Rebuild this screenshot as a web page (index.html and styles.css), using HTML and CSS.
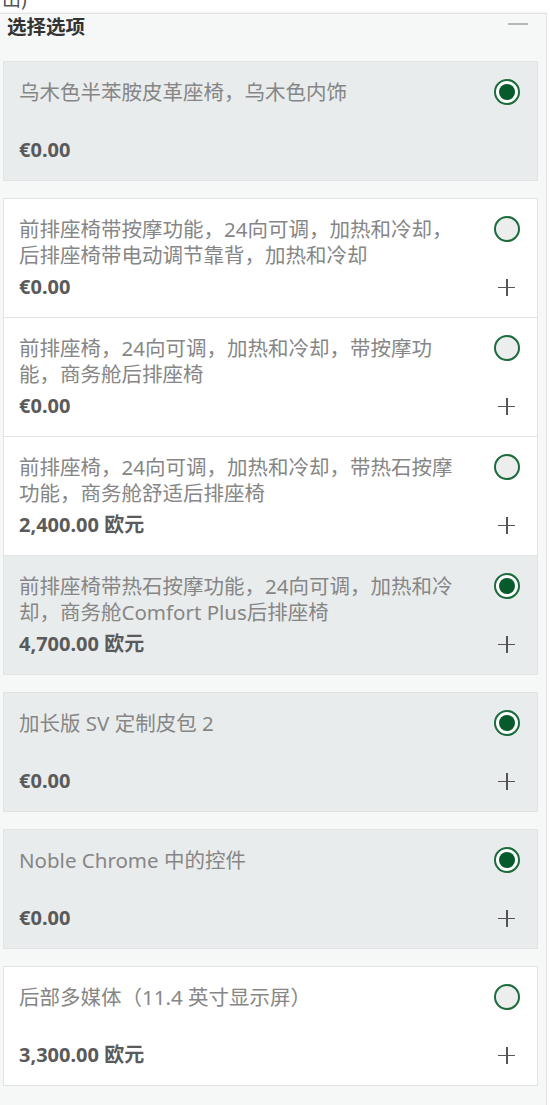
FILE: index.html
```html
<!DOCTYPE html>
<html>

<head>
    <meta charset='utf-8'>
    <title>选择选项</title>
    <link rel="stylesheet" href="styles.css">
</head>

<body>
    <div class="topbar"><span class="topbar-text">出)</span></div>
    <div class="panel">
        <div class="panel-head">
            <h2 class="panel-title">选择选项</h2>
            <span class="collapse"></span>
        </div>

        <div class="group">
            <div class="option selected">
                <div class="option-desc">乌木色半苯胺皮革座椅，乌木色内饰</div>
                <span class="radio on"></span>
                <div class="option-price">€0.00</div>
            </div>
        </div>

        <div class="group">
            <div class="option">
                <div class="option-desc">前排座椅带按摩功能，24向可调，加热和冷却，后排座椅带电动调节靠背，加热和冷却</div>
                <span class="radio"></span>
                <div class="option-price">€0.00</div>
                <span class="plus"></span>
            </div>
            <div class="option">
                <div class="option-desc">前排座椅，24向可调，加热和冷却，带按摩功能，商务舱后排座椅</div>
                <span class="radio"></span>
                <div class="option-price">€0.00</div>
                <span class="plus"></span>
            </div>
            <div class="option">
                <div class="option-desc">前排座椅，24向可调，加热和冷却，带热石按摩功能，商务舱舒适后排座椅</div>
                <span class="radio"></span>
                <div class="option-price">2,400.00 欧元</div>
                <span class="plus"></span>
            </div>
            <div class="option selected">
                <div class="option-desc">前排座椅带热石按摩功能，24向可调，加热和冷却，商务舱Comfort Plus后排座椅</div>
                <span class="radio on"></span>
                <div class="option-price">4,700.00 欧元</div>
                <span class="plus"></span>
            </div>
        </div>

        <div class="group">
            <div class="option selected">
                <div class="option-desc">加长版 SV 定制皮包 2</div>
                <span class="radio on"></span>
                <div class="option-price">€0.00</div>
                <span class="plus"></span>
            </div>
        </div>

        <div class="group">
            <div class="option selected">
                <div class="option-desc">Noble Chrome 中的控件</div>
                <span class="radio on"></span>
                <div class="option-price">€0.00</div>
                <span class="plus"></span>
            </div>
        </div>

        <div class="group">
            <div class="option">
                <div class="option-desc">后部多媒体（11.4 英寸显示屏）</div>
                <span class="radio"></span>
                <div class="option-price">3,300.00 欧元</div>
                <span class="plus"></span>
            </div>
        </div>
    </div>
</body>
</html>
```

FILE: styles.css
```css
body {
    margin: 0;
    background: #fff;
    font-family: "Noto Sans", "Noto Sans CJK SC", sans-serif;
}

.topbar {
    height: 13px;
    overflow: hidden;
}

.topbar-text {
    display: block;
    margin: -14px 0 0 2px;
    font-size: 19px;
    line-height: 26px;
    color: #555;
}

.panel {
    box-sizing: border-box;
    width: 547px;
    padding: 0 8px 15px 3px;
    background: #f6f8f7;
    border-top: 1px solid #e2e5e4;
    border-right: 1px solid #e2e5e4;
    border-bottom: 1px solid #e2e5e4;
    box-shadow: 0 -1px 2px rgba(0, 0, 0, .06);
}

.panel-head {
    display: flex;
    justify-content: space-between;
    height: 47px;
    padding-left: 4px;
}

.panel-title {
    margin: 0;
    font-size: 19.5px;
    line-height: 26px;
    font-weight: bold;
    color: #333;
}

.collapse {
    width: 20px;
    height: 2px;
    margin: 9px 10px 0 0;
    background: #b4b8b7;
}

.group {
    display: flex;
    flex-direction: column;
    margin-bottom: 17px;
}

.option {
    display: grid;
    grid-template-columns: 1fr 44px;
    grid-template-rows: 52px 26px;
    row-gap: 6px;
    padding: 17px 17px 17px 15px;
    background: #fff;
    border: 1px solid #e1e4e4;
}

.option + .option {
    margin-top: -1px;
}

.option.selected {
    background: #e9ecec;
}

.option-desc {
    font-size: 20.5px;
    line-height: 26px;
    color: #868686;
    padding-right: 8px;
}

.option-price {
    font-size: 20px;
    line-height: 26px;
    font-weight: bold;
    color: #5a5a5a;
}

.radio {
    justify-self: end;
    width: 22px;
    height: 22px;
    border: 2px solid #1c6b3c;
    border-radius: 50%;
    background: #eceeee;
    position: relative;
}

.radio.on {
    background: #fff;
}

.radio.on::after {
    content: '';
    position: absolute;
    top: 3px;
    left: 3px;
    width: 16px;
    height: 16px;
    border-radius: 50%;
    background: #075a29;
}

.plus {
    justify-self: end;
    align-self: center;
    position: relative;
    width: 17px;
    height: 17px;
    margin-right: 5px;
}

.plus::before,
.plus::after {
    content: '';
    position: absolute;
    background: #555;
}

.plus::before {
    left: 0;
    right: 0;
    top: 8px;
    height: 1.5px;
}

.plus::after {
    top: 0;
    bottom: 0;
    left: 8px;
    width: 1.5px;
}
```
